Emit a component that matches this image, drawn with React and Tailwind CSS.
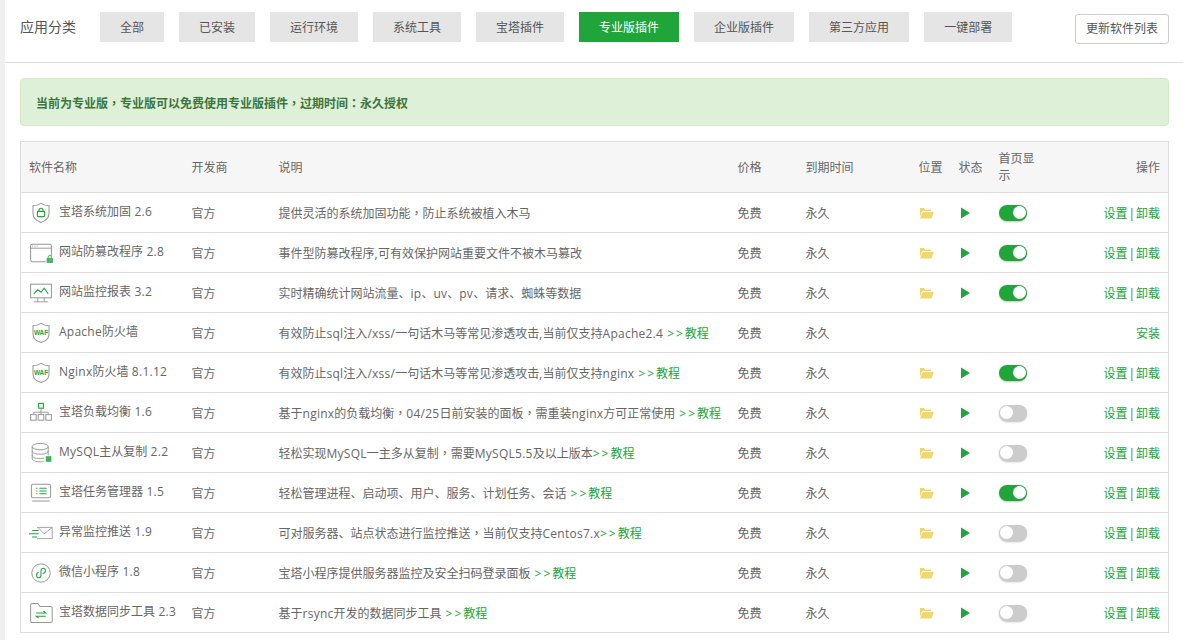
import { useState } from "react";

const G = "#20a53a";
const S = "#999";

const icons = {
  lock: (
    <>
      <path d="M15 3c-3 2-6 3-10 3v10c0 6 5 9 10 11 5-2 10-5 10-11V6c-4 0-7-1-10-3z" fill="none" stroke={S} strokeWidth="1.300" />
      <rect x="10.500" y="13" width="9" height="6.500" rx="1" fill="none" stroke={G} strokeWidth="1.400" />
      <path d="M12.500 13v-1.500a2.500 2.500 0 0 1 5 0V13" fill="none" stroke={G} strokeWidth="1.400" />
    </>
  ),
  window: (
    <>
      <path d="M21 26H5a3 3 0 0 1-3-3V6a2 2 0 0 1 2-2h22a2 2 0 0 1 2 2v13" fill="none" stroke={S} strokeWidth="1.300" />
      <path d="M2 9h26" stroke={S} strokeWidth="1.200" />
      <path d="M4 6.500h8" stroke={S} strokeWidth="1" strokeDasharray="1 1" />
      <rect x="22" y="21" width="8" height="6.500" rx="1" fill={G} opacity="0.8" />
      <path d="M24 21v-1a2 2 0 0 1 4 0v1" fill="none" stroke={G} strokeWidth="1.200" opacity="0.8" />
    </>
  ),
  monitor: (
    <>
      <rect x="2" y="4" width="26" height="17" fill="none" stroke={S} strokeWidth="1.300" />
      <path d="M6 16l5-5 4 3 4-5 5 7" fill="none" stroke={G} strokeWidth="1.300" />
      <path d="M11 21v5M19 21v5M6 26h18" stroke={S} strokeWidth="1.200" />
    </>
  ),
  waf: (
    <>
      <path d="M15 3c-3 2-6 3-10 3v11c0 6 5 8 10 10 5-2 10-4 10-10V6c-4 0-7-1-10-3z" fill="none" stroke={S} strokeWidth="1.300" />
      <text x="15" y="18" textAnchor="middle" fontSize="8" fontWeight="700" fill={G} fontFamily="Liberation Sans, sans-serif">WAF</text>
    </>
  ),
  tree: (
    <>
      <rect x="12" y="3" width="6" height="6" fill="none" stroke={G} strokeWidth="1.400" />
      <path d="M15 9v5M6 17v-3h18v3M15 14v3" fill="none" stroke={S} strokeWidth="1.200" />
      <rect x="2" y="17" width="7" height="7" fill="none" stroke={S} strokeWidth="1.300" />
      <rect x="11.500" y="17" width="7" height="7" fill="none" stroke={S} strokeWidth="1.300" />
      <rect x="21" y="17" width="7" height="7" fill="none" stroke={S} strokeWidth="1.300" />
    </>
  ),
  db: (
    <>
      <ellipse cx="14" cy="7" rx="10" ry="4" fill="none" stroke={S} strokeWidth="1.200" />
      <path d="M4 7v15c0 2.500 4 4 10 4 2 0 4-.2 5-.8M4 12.500c0 2.500 4 4 10 4s10-1.500 10-4M4 18c0 2.500 4 4 10 4 2 0 3-.2 5-.6M24 7v11" fill="none" stroke={S} strokeWidth="1.200" />
      <rect x="21" y="19" width="7" height="7" fill={G} opacity="0.85" />
    </>
  ),
  list: (
    <>
      <rect x="3" y="4" width="24" height="17" rx="2" fill="none" stroke={S} strokeWidth="1.300" />
      <path d="M4 25h22" stroke={S} strokeWidth="1.300" />
      <path d="M9 9h1.500M9 12.500h1.500M9 16h1.500M13 9h9M13 12.500h9M13 16h9" stroke={G} strokeWidth="1.300" />
    </>
  ),
  mail: (
    <>
      <path d="M10 8h19v14H10" fill="none" stroke={S} strokeWidth="1.100" />
      <path d="M11 8l8 8 10-8" fill="none" stroke={S} strokeWidth="1.100" />
      <path d="M4 12h8M0 16h12M4 20h6" stroke={G} strokeWidth="1.300" />
    </>
  ),
  mini: (
    <>
      <circle cx="15" cy="15" r="11.500" fill="none" stroke={S} strokeWidth="1.200" />
      <path d="M9.500 18c0 4 5 4 5.500 0v-6c.5-4 5.500-4 5.500 0 0 3-2.500 3.500-3.500 3.500M12 14.500c-1.500 0-2.500 1.500-2.500 3.500" fill="none" stroke={G} strokeWidth="1.300" />
    </>
  ),
  sync: (
    <>
      <path d="M4 3h7l3 4h13a2 2 0 0 1 2 2v16a2 2 0 0 1-2 2H4a2 2 0 0 1-2-2V5a2 2 0 0 1 2-2z" fill="none" stroke={S} strokeWidth="1.300" />
      <path d="M9 15h12l-3-2.500M21 19H9l3 2.500" fill="none" stroke={G} strokeWidth="1.300" />
    </>
  ),
};

const tabs = ["全部", "已安装", "运行环境", "系统工具", "宝塔插件", "专业版插件", "企业版插件", "第三方应用", "一键部署"];

const rows = [
  { icon: "lock", name: "宝塔系统加固 2.6", desc: "提供灵活的系统加固功能，防止系统被植入木马", on: true },
  { icon: "window", name: "网站防篡改程序 2.8", desc: "事件型防篡改程序,可有效保护网站重要文件不被木马篡改", on: true },
  { icon: "monitor", name: "网站监控报表 3.2", desc: "实时精确统计网站流量、ip、uv、pv、请求、蜘蛛等数据", on: true },
  { icon: "waf", name: "Apache防火墙", desc: "有效防止sql注入/xss/一句话木马等常见渗透攻击,当前仅支持Apache2.4", gap: true, install: true },
  { icon: "waf", name: "Nginx防火墙 8.1.12", desc: "有效防止sql注入/xss/一句话木马等常见渗透攻击,当前仅支持nginx", gap: true, on: true },
  { icon: "tree", name: "宝塔负载均衡 1.6", desc: "基于nginx的负载均衡，04/25日前安装的面板，需重装nginx方可正常使用", gap: true, on: false },
  { icon: "db", name: "MySQL主从复制 2.2", desc: "轻松实现MySQL一主多从复制，需要MySQL5.5及以上版本", gap: false, on: false },
  { icon: "list", name: "宝塔任务管理器 1.5", desc: "轻松管理进程、启动项、用户、服务、计划任务、会话", gap: true, on: true },
  { icon: "mail", name: "异常监控推送 1.9", desc: "可对服务器、站点状态进行监控推送，当前仅支持Centos7.x", gap: false, on: false },
  { icon: "mini", name: "微信小程序 1.8", desc: "宝塔小程序提供服务器监控及安全扫码登录面板", gap: true, on: false },
  { icon: "sync", name: "宝塔数据同步工具 2.3", desc: "基于rsync开发的数据同步工具", gap: true, on: false },
];

// latin runs are a bit wider in the original, and ，： sit centred in their cell
function Txt({ children }) {
  return children.split(/([\x20-\x7e]+|[，：])/).map((part, i) => {
    if (/^[，：]$/.test(part)) {
      return <span key={i} className="font-['Noto_Sans_CJK_TC',sans-serif]">{part}</span>;
    }
    if (/^[\x20-\x7e]+$/.test(part)) {
      return <span key={i} className="tracking-[0.25px]">{part}</span>;
    }
    return part;
  });
}

function Toggle({ on }) {
  return (
    <div className={`flex h-[16px] w-[28px] items-center rounded-full shadow-[0_1px_2px_rgba(0,0,0,0.25)] ${on ? "justify-end bg-[#20a53a] pr-[1px]" : "justify-start bg-[#ccc] pl-[1px]"}`}>
      <div className="h-[13px] w-[13px] rounded-full bg-white" />
    </div>
  );
}

function Folder() {
  return (
    <svg width="15" height="12" viewBox="0 0 15 12" className="block">
      <path d="M1 1h4l1 1.500h6V4H3.500L1 9.500z" fill="#f0d86c" />
      <path d="M4 5h11l-2.500 6.500H0.800z" fill="#f0d86c" />
    </svg>
  );
}

function Play() {
  return (
    <svg width="9" height="12" viewBox="0 0 10 12" className="ml-[2px] block">
      <path d="M0 0l10 6-10 6z" fill="#20a53a" />
    </svg>
  );
}

function Row({ row }) {
  return (
    <tr className="h-[40px] border-b border-[#ddd]">
      <td className="pl-[8px]">
        <div className="flex items-center gap-[6px]">
          <svg width="24" height="24" viewBox="0 0 30 30" className="shrink-0">{icons[row.icon]}</svg>
          <span className="mb-[2px] whitespace-nowrap"><Txt>{row.name}</Txt></span>
        </div>
      </td>
      <td className="pl-[8px] pt-[2px]">官方</td>
      <td className="pl-[8px] pt-[2px] whitespace-nowrap">
        <Txt>{row.desc}</Txt>
        {row.gap !== undefined && (
          <span className={`text-[#20a53a] ${row.gap ? "ml-[4px]" : ""}`}>
            <span className="tracking-[2px]">&gt;&gt;</span>教程
          </span>
        )}
      </td>
      <td className="pl-[8px] pt-[2px]">免费</td>
      <td className="pl-[8px] pt-[2px]">永久</td>
      <td className="pl-[8px]">{!row.install && <Folder />}</td>
      <td className="pl-[8px]">{!row.install && <Play />}</td>
      <td className="pl-[8px]">{!row.install && <Toggle on={row.on} />}</td>
      <td className="pr-[8px] pt-[2px] text-right whitespace-nowrap text-[#20a53a]">
        {row.install ? (
          "安装"
        ) : (
          <>
            设置<span className="mx-[1px] text-[#666]">|</span>卸载
          </>
        )}
      </td>
    </tr>
  );
}

export default function App() {
  const [active] = useState("专业版插件");

  return (
    <div className="h-[640px] overflow-hidden bg-white pl-[5px] text-[12px] text-[#666] font-['Open_Sans','Noto_Sans_CJK_SC',sans-serif]">
      <div className="fixed inset-y-0 left-0 w-[5px] bg-[#f0f0f0]" />
      <div className="flex h-[63px] items-start border-b border-[#ddd] pl-[15px] pr-[14px]">
        <span className="mt-[12px] w-[80px] shrink-0 text-[14px] leading-[30px] text-[#555]">应用分类</span>
        <div className="mt-[12px] flex gap-[15px]">
          {tabs.map((tab) => (
            <div
              key={tab}
              className={`h-[30px] px-[20px] pt-[1px] leading-[30px] ${tab === active ? "bg-[#20a53a] text-white" : "bg-[#e5e5e5] text-[#555]"}`}
            >
              {tab}
            </div>
          ))}
        </div>
        <button className="mt-[14px] ml-auto h-[30px] w-[94px] rounded-[3px] border border-[#ccc] bg-white text-[#555]">
          更新软件列表
        </button>
      </div>

      <div className="mt-[15px] ml-[15px] mr-[14px] flex h-[48px] items-center rounded-[4px] border border-[#d6e9c6] bg-[#dff0d8] pl-[15px] pt-[2px] font-bold text-[#3c763d]">
        <span><Txt>当前为专业版，专业版可以免费使用专业版插件，过期时间：永久授权</Txt></span>
      </div>

      <table className="mt-[15px] ml-[15px] w-[1149px] table-fixed border-collapse border border-[#ddd]">
        <colgroup>
          <col className="w-[163px]" />
          <col className="w-[87px]" />
          <col className="w-[459px]" />
          <col className="w-[68px]" />
          <col className="w-[113px]" />
          <col className="w-[40px]" />
          <col className="w-[40px]" />
          <col className="w-[60px]" />
          <col />
        </colgroup>
        <thead>
          <tr className="h-[51px] border-b border-[#ddd] bg-[#f6f6f6] text-left font-normal">
            <th className="pl-[8px] pt-[2px] font-normal">软件名称</th>
            <th className="pl-[8px] pt-[2px] font-normal">开发商</th>
            <th className="pl-[8px] pt-[2px] font-normal">说明</th>
            <th className="pl-[8px] pt-[2px] font-normal">价格</th>
            <th className="pl-[8px] pt-[2px] font-normal">到期时间</th>
            <th className="pl-[8px] pt-[2px] font-normal">位置</th>
            <th className="pl-[8px] pt-[2px] font-normal">状态</th>
            <th className="pl-[8px] pr-[16px] font-normal leading-[17px]">首页显示</th>
            <th className="pr-[8px] pt-[2px] text-right font-normal">操作</th>
          </tr>
        </thead>
        <tbody>
          {rows.map((row) => (
            <Row key={row.name} row={row} />
          ))}
        </tbody>
      </table>
    </div>
  );
}
